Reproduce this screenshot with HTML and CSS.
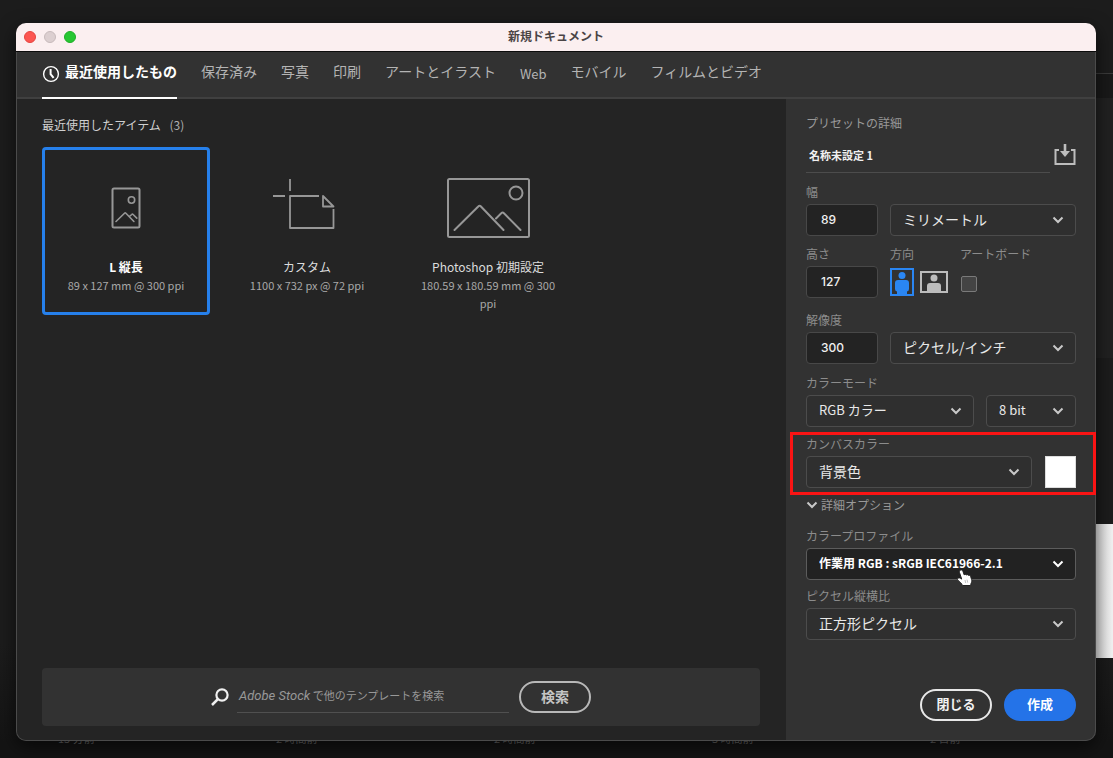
FILE: index.html
```html
<!DOCTYPE html>
<html lang="ja">
<head>
<meta charset="utf-8">
<title>新規ドキュメント</title>
<link rel="stylesheet" href="styles.css">
</head>
<body>
<div class="backdrop" aria-hidden="true">
  <div class="backdrop-pane"></div>
  <div class="backdrop-thumb"></div>
  <div class="backdrop-times"><span>15 分前</span><span>2 時間前</span><span>2 時間前</span><span>3 時間前</span><span>2 日前</span></div>
</div>

<div class="dialog" role="dialog" aria-labelledby="dialog-title">
  <header class="titlebar">
    <div class="lights">
      <button class="light light-close" type="button" aria-label="閉じる"></button>
      <button class="light light-min" type="button" aria-label="最小化"></button>
      <button class="light light-zoom" type="button" aria-label="拡大"></button>
    </div>
    <h1 class="title" id="dialog-title">新規ドキュメント</h1>
  </header>

  <div class="body">
    <nav class="tabs">
      <button class="tab tab-active" type="button">
        <svg class="tab-icon" width="18" height="18" viewBox="0 0 18 18" fill="none" stroke="currentColor"><circle cx="9" cy="9" r="7.4" stroke-width="1.4"/><path d="M8.6 4v5.2l3 3.6" stroke-width="2"/></svg>
        最近使用したもの</button>
      <button class="tab" type="button">保存済み</button>
      <button class="tab" type="button">写真</button>
      <button class="tab" type="button">印刷</button>
      <button class="tab" type="button">アートとイラスト</button>
      <button class="tab tab-latin" type="button">Web</button>
      <button class="tab" type="button">モバイル</button>
      <button class="tab" type="button">フィルムとビデオ</button>
    </nav>

    <div class="columns">
      <main class="main">
        <h2 class="section-title">最近使用したアイテム <span class="count">(3)</span></h2>
        <div class="cards">
          <button class="card card-selected" type="button">
            <span class="card-art"><svg width="30" height="42" viewBox="0 0 30 42" fill="none" stroke="currentColor" stroke-width="2" stroke-linecap="round" stroke-linejoin="round"><rect x="1.500" y="1.500" width="27" height="39" rx="1.500"/><circle cx="20.500" cy="13" r="3.200" stroke-width="1.600"/><path d="M5 34.500l8.500-8.300a1 1 0 0 1 1.400 0l8 8.300M18.500 29.500l2.200-2a1 1 0 0 1 1.400 0l3.700 3.600" stroke-width="1.600"/></svg></span>
            <span class="card-name">L 縦長</span>
            <span class="card-size">89 x 127 mm @ 300 ppi</span>
          </button>
          <button class="card" type="button">
            <span class="card-art"><svg class="art-custom" width="64" height="52" viewBox="0 0 64 52" fill="none" stroke="currentColor" stroke-width="1.800" stroke-linejoin="round"><path d="M18 1v12M1 18h12M47 18H18v32h43.500V31"/><path d="M51 18v10.500h10.500z"/></svg></span>
            <span class="card-name">カスタム</span>
            <span class="card-size">1100 x 732 px @ 72 ppi</span>
          </button>
          <button class="card" type="button">
            <span class="card-art"><svg width="83" height="60" viewBox="0 0 83 60" fill="none" stroke="currentColor" stroke-width="2" stroke-linecap="round" stroke-linejoin="round"><rect x="1" y="1" width="81" height="58" rx="1.500"/><circle cx="69" cy="15" r="6.500"/><path d="M7.500 52L31.500 28.200a1.500 1.500 0 0 1 2.200 0L56.500 52M49 40.500l5.500-5.500a1.500 1.500 0 0 1 2.200 0L73.500 52"/></svg></span>
            <span class="card-name">Photoshop 初期設定</span>
            <span class="card-size">180.59 x 180.59 mm @ 300 ppi</span>
          </button>
        </div>

        <form class="search">
          <svg class="search-icon" width="18" height="18" viewBox="0 0 18 18" fill="none" stroke="currentColor"><circle cx="11" cy="7" r="5.600" stroke-width="2.200"/><path d="M7 11L1 17" stroke-width="2.500"/></svg>
          <div class="search-field">
            <input class="search-input" id="stock" type="text" placeholder=" ">
            <label class="search-hint" for="stock"><span class="brand">Adobe Stock</span> で他のテンプレートを検索</label>
          </div>
          <button class="pill pill-muted" type="button">検索</button>
        </form>
      </main>

      <aside class="sidebar">
        <label class="side-title" for="doc-name">プリセットの詳細</label>
        <div class="name-row">
          <input class="name-input" id="doc-name" type="text" value="名称未設定 1">
          <button class="icon-button" type="button" aria-label="プリセットを保存">
            <svg width="22" height="22" viewBox="0 0 22 22" fill="none" stroke="currentColor"><path d="M5 6H1.500v14h19V6H17" stroke-width="2"/><path d="M11 0v8" stroke-width="2.600"/><path d="M6 7h10l-5 6z" fill="currentColor" stroke="none"/></svg>
          </button>
        </div>

        <div class="group group-width">
          <div class="field">
            <label class="label" for="w">幅</label>
            <input class="number" id="w" type="text" value="89">
          </div>
          <div class="field field-end">
            <div class="select"><select id="unit" aria-label="単位"><option>ミリメートル</option></select><svg class="chevron" width="12" height="8" viewBox="0 0 12 8"><path d="M1.500 1.500L6 6l4.500-4.500"/></svg></div>
          </div>
        </div>

        <div class="group group-height">
          <div class="field">
            <label class="label" for="h">高さ</label>
            <input class="number" id="h" type="text" value="127">
          </div>
          <fieldset class="field orient">
            <legend class="label">方向</legend>
            <div class="orient-row">
              <label class="radio radio-on"><input type="radio" name="orient" aria-label="縦" checked>
                <svg width="24" height="28" viewBox="0 0 24 28"><rect x="1" y="1" width="22" height="26" fill="none" stroke="currentColor" stroke-width="2"/><circle cx="12" cy="7.500" r="3.500" fill="currentColor"/><path d="M8 12h8q3 0 3 3v6q0 2-2 2.500V27H7v-3.500q-2-.5-2-2.500v-6q0-3 3-3z" fill="currentColor"/></svg></label>
              <label class="radio"><input type="radio" name="orient" aria-label="横">
                <svg width="28" height="22" viewBox="0 0 28 22"><rect x="1" y="1" width="26" height="20" fill="none" stroke="currentColor" stroke-width="2"/><circle cx="14" cy="7" r="3.500" fill="currentColor"/><path d="M10 12h8q3 0 3 3v6H7v-6q0-3 3-3z" fill="currentColor"/></svg></label>
            </div>
          </fieldset>
          <div class="field">
            <label class="label" for="artboard">アートボード</label>
            <div class="check-row"><input class="check" id="artboard" type="checkbox"></div>
          </div>
        </div>

        <div class="group group-res">
          <div class="field">
            <label class="label" for="res">解像度</label>
            <input class="number" id="res" type="text" value="300">
          </div>
          <div class="field field-end">
            <div class="select"><select aria-label="解像度の単位"><option>ピクセル/インチ</option></select><svg class="chevron" width="12" height="8" viewBox="0 0 12 8"><path d="M1.500 1.500L6 6l4.500-4.500"/></svg></div>
          </div>
        </div>

        <div class="group group-mode">
          <div class="field">
            <label class="label" for="mode">カラーモード</label>
            <div class="select select-latin"><select id="mode"><option>RGB カラー</option></select><svg class="chevron" width="12" height="8" viewBox="0 0 12 8"><path d="M1.500 1.500L6 6l4.500-4.500"/></svg></div>
          </div>
          <div class="field field-end">
            <div class="select select-latin"><select aria-label="ビット数"><option>8 bit</option></select><svg class="chevron" width="12" height="8" viewBox="0 0 12 8"><path d="M1.500 1.500L6 6l4.500-4.500"/></svg></div>
          </div>
        </div>

        <div class="group group-canvas">
          <div class="field">
            <label class="label" for="canvas">カンバスカラー</label>
            <div class="select"><select id="canvas"><option>背景色</option></select><svg class="chevron" width="12" height="8" viewBox="0 0 12 8"><path d="M1.500 1.500L6 6l4.500-4.500"/></svg></div>
          </div>
          <button class="swatch" type="button" aria-label="カンバスの色"></button>
          <div class="highlight"></div>
        </div>

        <button class="details" type="button"><svg class="chevron" width="12" height="8" viewBox="0 0 12 8"><path d="M1.500 1.500L6 6l4.500-4.500"/></svg>詳細オプション</button>

        <div class="field">
          <label class="label" for="profile">カラープロファイル</label>
          <div class="select select-hover"><select id="profile"><option>作業用 RGB : sRGB IEC61966-2.1</option></select><svg class="chevron" width="12" height="8" viewBox="0 0 12 8"><path d="M1.500 1.500L6 6l4.500-4.500"/></svg>
            <svg class="pointer" width="17" height="19" viewBox="0 0 17 19"><path d="M4.300 2.200c-.8.500-1.100 1.400-.8 2.300l2.200 6.600c-.9-.7-2-1.400-3.100-1.100-1.200.2-1.500 1.500-.8 2.200 1.900 1.600 4 3 4.600 5.300h8.300l.3-2c.7-1.300 1-2.500.6-4l-1-3.100c-.3-.9-1.200-1.300-2.100-1-.4-.8-1.400-1-2.100-.5-.5-.7-1.700-.7-2.200 0L6.800 2.900c-.4-.9-1.500-1.300-2.500-.7z" fill="#fff" stroke="#222" stroke-width="1"/><path d="M9 12l.7 3M11 11.600l.7 3" stroke="#999" stroke-width=".6"/></svg>
          </div>
        </div>

        <div class="field field-ratio">
          <label class="label" for="ratio">ピクセル縦横比</label>
          <div class="select"><select id="ratio"><option>正方形ピクセル</option></select><svg class="chevron" width="12" height="8" viewBox="0 0 12 8"><path d="M1.500 1.500L6 6l4.500-4.500"/></svg></div>
        </div>

        <div class="actions">
          <button class="pill" type="button">閉じる</button>
          <button class="pill pill-primary" type="button">作成</button>
        </div>
      </aside>
    </div>
  </div>
</div>
</body>
</html>
```

FILE: styles.css
```css
* { box-sizing: border-box; }

body {
  margin: 0;
  min-height: 100vh;
  display: flex;
  padding: 23px 17px 17px 16px;
  background: #1a1a1a;
  color: #e6e6e6;
  font: 12px/18px "Noto Sans CJK JP", sans-serif;
}

button, input, select { font: inherit; color: inherit; margin: 0; }
button { padding: 0; border: 0; background: none; }
svg { display: block; flex: none; }

/* application window behind the dialog */
.backdrop { position: absolute; inset: 0; overflow: hidden; background: linear-gradient(#1c1c1c 85%, #141414 98%); }
.backdrop-pane { position: absolute; right: 0; top: 73px; width: 100px; height: 285px; border-top: 1px solid #3a3a3a; background: linear-gradient(#191919 24px, #212121 24px); }
.backdrop-thumb { position: absolute; right: 0; top: 524px; width: 100px; height: 134px; background: linear-gradient(90deg, #ddd 84%, #f4f4f4); }
.backdrop-times { position: absolute; left: 58px; right: 0; bottom: 12px; display: grid; grid-template-columns: repeat(5, 218px); font-size: 11px; line-height: 16px; color: #6a6a6a; }

.dialog {
  position: relative;
  flex: 1;
  min-width: 0;
  display: flex;
  flex-direction: column;
  border-radius: 10px;
  box-shadow: 0 6px 18px rgba(0, 0, 0, .6);
}

.titlebar {
  display: grid;
  grid-template-columns: 1fr auto 1fr;
  align-items: center;
  height: 29px;
  padding: 0 8px;
  background: #fbeff0;
  border-bottom: 1px solid #0c0c0c;
  border-radius: 10px 10px 0 0;
}
.lights { display: flex; gap: 8px; }
.light { width: 12px; height: 12px; border-radius: 50%; }
.light-close { background: #fc5550; border: 1px solid #e5443f; }
.light-min { background: #dccfd0; border: 1px solid #c8bbbc; }
.light-zoom { background: #27c732; border: 1px solid #1fae28; }
.title { margin: 0; padding-bottom: 2px; font-size: 12px; line-height: 18px; font-weight: 700; color: #4a4445; }

.body {
  flex: 1;
  display: flex;
  flex-direction: column;
  background: #323232;
  border: 1px solid #4b4b4b;
  border-top: 0;
  border-radius: 0 0 10px 10px;
}

.tabs { display: flex; gap: 24px; height: 47px; padding: 0 25px; border-bottom: 2px solid #404040; }
.tab { display: flex; align-items: flex-start; gap: 5px; height: 47px; padding-top: 9px; font-size: 14px; line-height: 20px; color: #b4b4b4; white-space: nowrap; border-bottom: 2px solid transparent; }
.tab-active { color: #fff; font-weight: 700; border-bottom-color: #fff; }
.tab-icon { margin-top: 4px; }
.tab-latin { padding-top: 12px; font-size: 13px; }

.columns { flex: 1; display: flex; }
.main { flex: 1; min-width: 0; display: flex; flex-direction: column; padding: 17px 26px 14px 25px; background: #242424; border-radius: 0 0 0 9px; }
.section-title { margin: 0 0 13px; font-size: 12px; line-height: 18px; font-weight: 400; color: #d0d0d0; }
.count { margin-left: 6px; color: #b0b0b0; }

.cards { display: grid; grid-template-columns: repeat(auto-fill, 168px); gap: 13px; }
.card { display: flex; flex-direction: column; align-items: center; min-height: 168px; padding: 7px 12px 0; border: 3px solid transparent; border-radius: 4px; text-align: center; }
.card-selected { border-color: #2680eb; }
.card-art { display: flex; align-items: center; height: 101px; color: #979797; }
.art-custom { margin: 0 6px 8px 0; }
.card-name { font-size: 12px; line-height: 18px; color: #dcdcdc; }
.card-selected .card-name { color: #fff; font-weight: 700; }
.card-size { font-size: 11px; line-height: 18px; color: #a8a8a8; }

.search { display: flex; align-items: center; justify-content: center; margin-top: auto; height: 58px; background: #323232; border-radius: 4px; }
.search-icon { margin-right: 8px; color: #f0f0f0; }
.search-field { display: grid; width: 272px; margin-right: 10px; }
.search-input, .search-hint { grid-area: 1 / 1; }
.search-input { width: 100%; height: 32px; padding: 0 2px; border: 0; border-bottom: 1px solid #505050; background: none; outline: 0; }
.search-hint { padding: 5px 2px; font-size: 11px; line-height: 18px; color: #989898; pointer-events: none; }
.search-input:not(:placeholder-shown) + .search-hint { display: none; }
.brand { font: italic 13px/18px Roboto, sans-serif; }

.pill { width: 72px; height: 32px; padding-bottom: 2px; border: 2px solid #e8e8e8; border-radius: 16px; font-size: 13px; line-height: 20px; font-weight: 700; color: #f2f2f2; }
.pill-muted { border-color: #b8b8b8; color: #c4c4c4; font-size: 14px; }
.pill-primary { border-color: #2473e8; background: #2473e8; color: #fff; }

.sidebar { flex: 0 0 309px; min-width: 0; display: flex; flex-direction: column; padding: 15px 19px 19px 20px; }
.side-title { color: #999; }
.name-row { display: flex; align-items: center; gap: 4px; margin: 8px 0 11px; }
.name-input { flex: 1; min-width: 0; height: 33px; padding: 0 3px 2px; border: 0; border-bottom: 1px solid #4c4c4c; background: none; font-size: 11px; font-weight: 700; color: #f0f0f0; }
.icon-button { padding-bottom: 3px; color: #bdbdbd; }

.group { display: grid; gap: 12px; }
.group-width, .group-res { grid-template-columns: 72px minmax(0, 1fr); }
.group-height { grid-template-columns: 72px 58px minmax(0, 1fr); margin: 10px 0 14px; }
.group-mode { grid-template-columns: 168px minmax(0, 1fr); margin: 11px 0 9px; }
.group-canvas { position: relative; grid-template-columns: minmax(0, 1fr) 32px; }

.field { display: flex; flex-direction: column; gap: 4px; min-width: 0; }
.field-end { justify-content: flex-end; }
.field-ratio { margin-top: 8px; }
.label { padding: 0; font-size: 12px; line-height: 16px; color: #8c8c8c; white-space: nowrap; }

.number { width: 100%; height: 32px; padding: 0 14px 2px; border: 1px solid #484848; border-radius: 4px; background: #232323; font: 500 12px/16px Inter, sans-serif; color: #f0f0f0; }

.select { position: relative; display: grid; grid-template-columns: minmax(0, 1fr); align-items: center; }
.select select { grid-area: 1 / 1; width: 100%; min-width: 0; height: 32px; padding: 0 12px 2px; appearance: none; border: 1px solid #4c4c4c; border-radius: 4px; background: #2f2f2f; font-size: 14px; line-height: 20px; color: #e8e8e8; }
.select .chevron { grid-area: 1 / 1; justify-self: end; margin-right: 12px; pointer-events: none; }
.chevron { fill: none; stroke: #c8c8c8; stroke-width: 2; }
.select-latin select { font-size: 13px; }
.select-hover select { background: #222; border-color: #5c5c5c; font-size: 12px; font-weight: 700; color: #fff; }
.select-hover .chevron { stroke: #fff; }
.pointer { position: absolute; left: 150px; top: 20px; }

.orient { margin: 0; border: 0; padding: 0; display: block; }
.orient-row { display: flex; align-items: center; gap: 6px; height: 32px; margin-top: 4px; }
.radio { display: grid; color: #bcbcbc; }
.radio > * { grid-area: 1 / 1; }
.radio input { appearance: none; }
.radio-on { color: #2a86f3; }
.check-row { display: flex; align-items: center; height: 32px; padding: 4px 0 0 1px; }
.check { width: 16px; height: 16px; appearance: none; border: 1px solid #7a7a7a; border-radius: 2px; background: #444; }

.swatch { align-self: end; justify-self: end; width: 31px; height: 32px; background: #fff; border: 1px solid #ddd; }
.highlight { position: absolute; inset: -4px -20px -7px -16px; border: 3px solid #fa1414; pointer-events: none; }

.details { display: flex; align-items: center; align-self: flex-start; gap: 3px; margin: 9px 0 15px; font-size: 12px; line-height: 16px; color: #999; }
.actions { display: flex; justify-content: flex-end; gap: 12px; margin-top: auto; }
```
